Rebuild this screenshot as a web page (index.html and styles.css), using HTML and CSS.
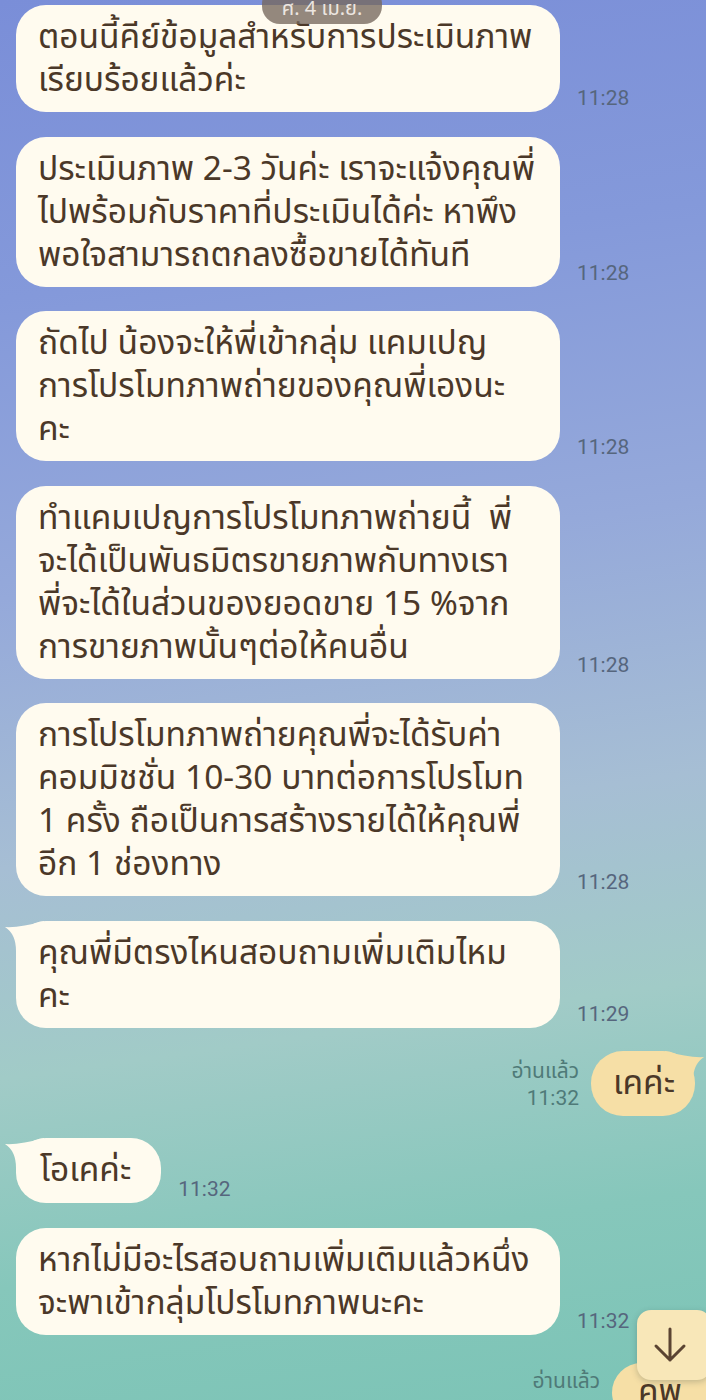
FILE: index.html
```html
<!DOCTYPE html>
<html lang="th">
<head>
<meta charset="utf-8">
<link rel="stylesheet" href="styles.css">
</head>
<body>
<div class="screen">
  <div class="date-badge">ศ. 4 เม.ย.</div>
  <div class="chat">
    <div class="row in">
      <div class="bubble full"><span class="txt">ตอนนี้คีย์ข้อมูลสำหรับการประเมินภาพ<br>เรียบร้อยแล้วค่ะ</span></div>
      <div class="meta">11:28</div>
    </div>
    <div class="row in">
      <div class="bubble full"><span class="txt">ประเมินภาพ 2-3 วันค่ะ เราจะแจ้งคุณพี่<br>ไปพร้อมกับราคาที่ประเมินได้ค่ะ หาพึง<br>พอใจสามารถตกลงซื้อขายได้ทันที</span></div>
      <div class="meta">11:28</div>
    </div>
    <div class="row in">
      <div class="bubble full"><span class="txt">ถัดไป น้องจะให้พี่เข้ากลุ่ม แคมเปญ<br>การโปรโมทภาพถ่ายของคุณพี่เองนะ<br>คะ</span></div>
      <div class="meta">11:28</div>
    </div>
    <div class="row in">
      <div class="bubble full"><span class="txt">ทำแคมเปญการโปรโมทภาพถ่ายนี้&nbsp; พี่<br>จะได้เป็นพันธมิตรขายภาพกับทางเรา<br>พี่จะได้ในส่วนของยอดขาย 15 %จาก<br>การขายภาพนั้นๆต่อให้คนอื่น</span></div>
      <div class="meta">11:28</div>
    </div>
    <div class="row in">
      <div class="bubble full"><span class="txt">การโปรโมทภาพถ่ายคุณพี่จะได้รับค่า<br>คอมมิชชั่น 10-30 บาทต่อการโปรโมท<br>1 ครั้ง ถือเป็นการสร้างรายได้ให้คุณพี่<br>อีก 1 ช่องทาง</span></div>
      <div class="meta">11:28</div>
    </div>
    <div class="row in">
      <div class="bubble full">
        <svg class="tail-l" viewBox="0 0 40 30" width="40" height="30"><path d="M1 6 Q16 7 40 0 L40 30 L12 30 Q12 13 1 6 Z" fill="#fffbef"/></svg>
        <span class="txt">คุณพี่มีตรงไหนสอบถามเพิ่มเติมไหม<br>คะ</span>
      </div>
      <div class="meta">11:29</div>
    </div>
    <div class="row out">
      <div class="meta right">อ่านแล้ว<br>11:32</div>
      <div class="bubble mine">
        <svg class="tail-r" viewBox="0 0 40 30" width="40" height="30"><path d="M39 6 Q24 7 0 0 L0 30 L28 30 Q28 13 39 6 Z" fill="#f6dfa6"/></svg>
        <span class="txt">เคค่ะ</span>
      </div>
    </div>
    <div class="row in">
      <div class="bubble short">
        <svg class="tail-l" viewBox="0 0 40 30" width="40" height="30"><path d="M1 6 Q16 7 40 0 L40 30 L12 30 Q12 13 1 6 Z" fill="#fffbef"/></svg>
        <span class="txt">โอเคค่ะ</span>
      </div>
      <div class="meta">11:32</div>
    </div>
    <div class="row in">
      <div class="bubble full"><span class="txt">หากไม่มีอะไรสอบถามเพิ่มเติมแล้วหนึ่ง<br>จะพาเข้ากลุ่มโปรโมทภาพนะคะ</span></div>
      <div class="meta">11:32</div>
    </div>
    <div class="row out last">
      <div class="meta right">อ่านแล้ว</div>
      <div class="bubble mine partial"><span class="txt">คพ</span></div>
    </div>
  </div>
  <button class="scroll-down" aria-label="เลื่อนลง">
    <svg viewBox="0 0 40 40" width="40" height="40"><path d="M20 4 V35 M6 21 L20 35 L34 21" fill="none" stroke="#5b4432" stroke-width="3" stroke-linecap="round" stroke-linejoin="round"/></svg>
  </button>
</div>
</body>
</html>
```
FILE: styles.css
```css
html, body {
  margin: 0;
  padding: 0;
}
body {
  width: 706px;
  height: 1400px;
  overflow: hidden;
  font-family: "Noto Sans Thai", "Noto Sans", "DejaVu Sans", sans-serif;
}
.screen {
  position: relative;
  width: 706px;
  height: 1400px;
  overflow: hidden;
  background: linear-gradient(172deg, #7a8ed8 0%, #8499da 20%, #95a9da 40%, #a6bed4 58%, #a1cbc7 72%, #86c7bb 86%, #7cc4b6 100%);
}
.date-badge {
  position: absolute;
  left: 262px;
  top: -14px;
  width: 120px;
  height: 38px;
  border-radius: 18px;
  background: rgba(118, 104, 92, 0.78);
  color: #ece6e1;
  font-size: 20px;
  line-height: 46px;
  text-align: center;
  z-index: 3;
}
.chat {
  display: flex;
  flex-direction: column;
  gap: 24.5px;
  padding: 5px 0 0 16px;
}
.row {
  display: flex;
  align-items: flex-end;
  gap: 17px;
}
.row.out {
  justify-content: flex-end;
  padding-right: 11px;
  gap: 12px;
  margin-top: -1px;
  margin-bottom: -2.5px;
}
.bubble {
  position: relative;
  background: #fffbef;
  color: #4b3828;
  font-size: 33.5px;
  line-height: 43px;
  padding: 11px 20px 10px 22px;
  border-radius: 30px;
  white-space: nowrap;
}
.bubble .txt {
  position: relative;
  z-index: 1;
}
.bubble.full {
  width: 544px;
  box-sizing: border-box;
}
.bubble.short {
  padding: 11px 30px 11px 24px;
}
.bubble.mine {
  background: #f6dfa6;
  padding: 11px 20px 11px 22px;
  border-radius: 32px;
}
.tail-l {
  position: absolute;
  left: -12px;
  top: 0;
  display: block;
  z-index: 0;
}
.tail-r {
  position: absolute;
  right: -10px;
  top: 0;
  display: block;
  z-index: 0;
}
.meta {
  font-family: "Roboto", "Noto Sans Thai", "Noto Sans", sans-serif;
  font-size: 21px;
  color: #56667d;
  line-height: 24px;
  padding-bottom: 2px;
}
.meta.right {
  text-align: right;
  color: #4f7a78;
  font-size: 21px;
  line-height: 27px;
  padding-bottom: 4px;
}
.row.last {
  margin-top: 4px;
  padding-right: 0;
  margin-right: -60px;
  align-items: flex-start;
}
.row.last .meta.right {
  padding-top: 5px;
}
.bubble.partial {
  width: 154px;
  box-sizing: border-box;
  padding: 8px 26px;
}
.scroll-down {
  position: absolute;
  left: 637px;
  top: 1310px;
  width: 74px;
  height: 70px;
  border: none;
  border-radius: 14px;
  background: #f8e7b8;
  box-shadow: 0 2px 6px rgba(40, 60, 60, 0.25);
  display: flex;
  align-items: center;
  justify-content: center;
  padding: 0 8px 0 0;
  z-index: 4;
}
.scroll-down svg {
  display: block;
}
```
